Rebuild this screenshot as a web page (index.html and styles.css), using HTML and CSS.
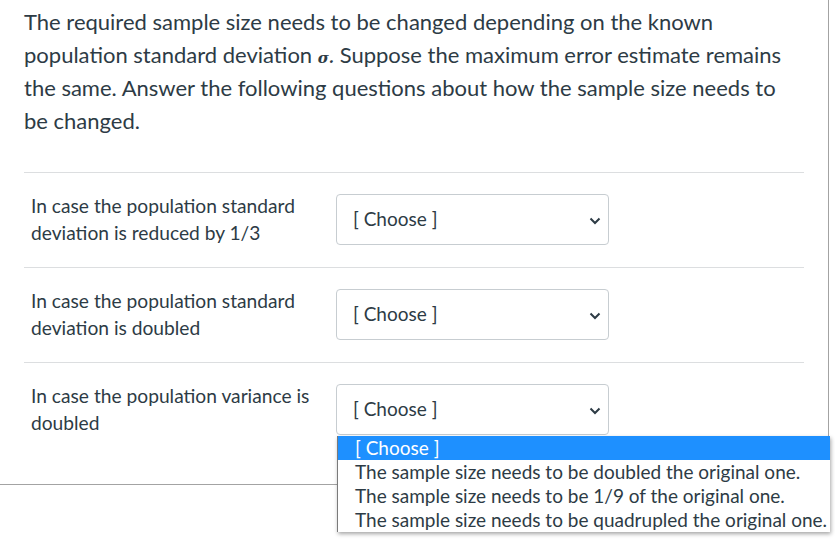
FILE: index.html
```html
<!DOCTYPE html>
<html>
<head>
<meta charset="utf-8">
<link rel="stylesheet" href="styles.css">
</head>
<body>
<div class="question">
  <p class="prompt">The required sample size needs to be changed depending on the known population standard deviation <span class="sigma">σ.</span> Suppose the maximum error estimate remains the same. Answer the following questions about how the sample size needs to be changed.</p>
  <div class="answers">
    <div class="row">
      <div class="label">In case the population standard deviation is reduced by 1/3</div>
      <div class="select-wrap">
        <div class="select"><span>[ Choose ]</span><svg class="chev" width="12" height="8" viewBox="0 0 12 8"><path d="M1.5 1.5 L6 6 L10.5 1.5" fill="none" stroke="#2d3b45" stroke-width="2"/></svg></div>
      </div>
    </div>
    <div class="row">
      <div class="label">In case the population standard deviation is doubled</div>
      <div class="select-wrap">
        <div class="select"><span>[ Choose ]</span><svg class="chev" width="12" height="8" viewBox="0 0 12 8"><path d="M1.5 1.5 L6 6 L10.5 1.5" fill="none" stroke="#2d3b45" stroke-width="2"/></svg></div>
      </div>
    </div>
    <div class="row">
      <div class="label">In case the population variance is doubled</div>
      <div class="select-wrap">
        <div class="select"><span>[ Choose ]</span><svg class="chev" width="12" height="8" viewBox="0 0 12 8"><path d="M1.5 1.5 L6 6 L10.5 1.5" fill="none" stroke="#2d3b45" stroke-width="2"/></svg></div>
        <ul class="menu">
          <li class="active">[ Choose ]</li>
          <li>The sample size needs to be doubled the original one.</li>
          <li>The sample size needs to be 1/9 of the original one.</li>
          <li>The sample size needs to be quadrupled the original one.</li>
        </ul>
      </div>
    </div>
  </div>
</div>
</body>
</html>
```

FILE: styles.css
```css
html, body {
  margin: 0;
  padding: 0;
  background: #ffffff;
}
html {
  min-height: 542px;
}
body {
  min-height: 542px;
  font-family: Lato, "Open Sans", sans-serif;
  color: #2d3b45;
}
.question {
  width: 828px;
  height: 484px;
  border-right: 1px solid #a3a3a3;
  border-bottom: 1px solid #a3a3a3;
  box-sizing: content-box;
}
.prompt {
  margin: 0;
  padding: 5px 24px 0 24px;
  font-size: 22px;
  line-height: 33px;
}
.sigma {
  font-family: "DejaVu Serif", serif;
  font-style: italic;
  font-weight: bold;
  font-size: 15px;
  line-height: 0;
}
.answers {
  margin: 35px 24px 0 24px;
}
.row {
  display: flex;
  align-items: flex-start;
  border-top: 1px solid #dcdee0;
  padding: 21px 0 22px 7px;
  height: 51px;
}
.label {
  width: 290px;
  margin-right: 15px;
  margin-top: -2px;
  font-size: 19.2px;
  line-height: 27px;
}
.select-wrap {
  position: relative;
}
.select {
  width: 273px;
  height: 51px;
  box-sizing: border-box;
  border: 1px solid #c7cdd1;
  border-radius: 4px;
  display: flex;
  align-items: center;
  justify-content: space-between;
  padding: 0 7px 2px 16px;
  font-size: 19px;
}
.chev {
  margin-top: 4px;
}
.menu {
  position: absolute;
  top: 52px;
  left: 1px;
  margin: 0;
  padding: 0;
  list-style: none;
  width: 492px;
  background: #ffffff;
  border-left: 1px solid #7a7a7a;
  box-shadow: 1px 2px 4px rgba(0, 0, 0, 0.35);
  font-size: 19px;
  z-index: 2;
}
.menu li {
  height: 24px;
  line-height: 24px;
  padding-left: 17px;
  white-space: nowrap;
}
.menu li.active {
  background: #1e90ff;
  color: #ffffff;
}
```
